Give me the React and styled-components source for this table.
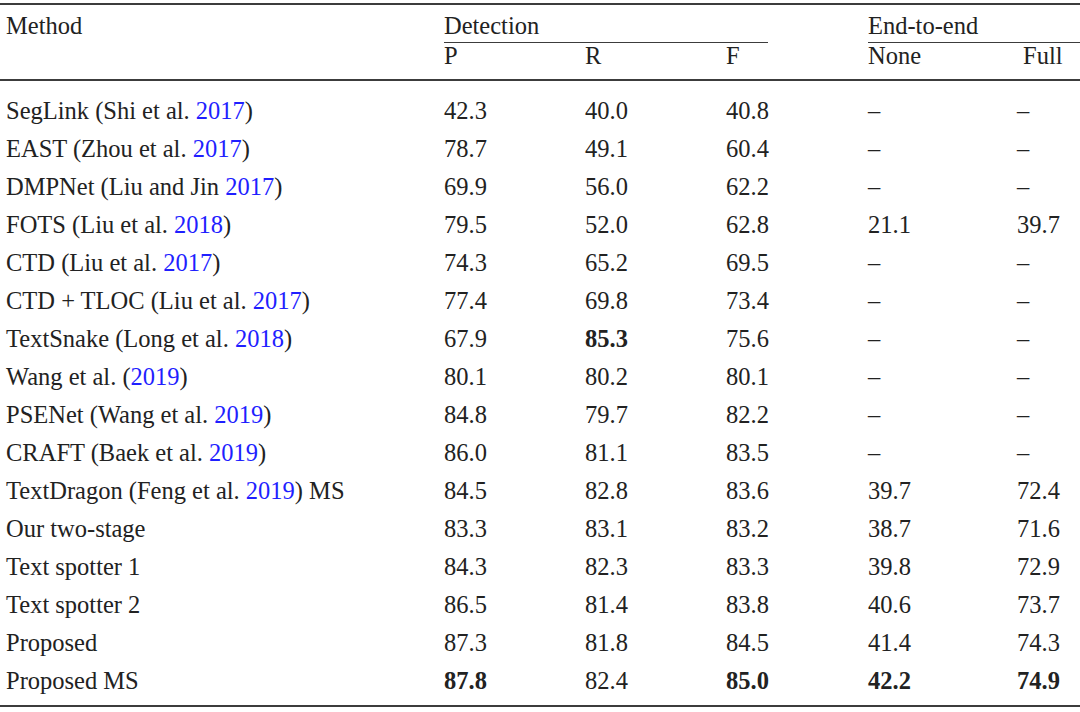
import React from "react";
import styled, { createGlobalStyle } from "styled-components";

const GlobalStyle = createGlobalStyle`
  html, body {
    margin: 0;
    padding: 0;
    background: #ffffff;
  }
  body {
    font-family: "Liberation Serif", "Times New Roman", serif;
    color: #222222;
  }
`;

const Page = styled.div`
  width: 1080px;
  height: 712px;
  padding-top: 3px;
  box-sizing: border-box;
  font-size: 24.5px;
`;

const Rule = styled.div`
  height: 2px;
  background: #3c3c3c;
`;

const Cols = `grid-template-columns: 444px 141px 141px 142px 149px 1fr;`;

const HeadTop = styled.div`
  display: grid;
  ${Cols}
  padding-top: 5px;
  line-height: 32px;
  height: 32px;
`;

const HeadBottom = styled.div`
  display: grid;
  ${Cols}
  line-height: 28px;
  padding-bottom: 9px;
`;

const GroupCell = styled.div`
  grid-column: ${(p) => p.$span};
  padding-left: ${(p) => p.$indent || 0}px;
  border-bottom: 1px solid #3c3c3c;
  width: ${(p) => p.$line}px;
  box-sizing: border-box;
`;

const Cell = styled.div`
  padding-left: ${(p) => p.$indent || 0}px;
  font-weight: ${(p) => (p.$bold ? 700 : 400)};
  white-space: nowrap;
`;

const Body = styled.div`
  padding-top: 11px;
  padding-bottom: 5px;
`;

const Row = styled.div`
  display: grid;
  ${Cols}
  height: 38px;
  line-height: 38px;
`;

const Cite = styled.span`
  color: #1f1fff;
`;

const rows = [
  [["SegLink (Shi et al. ", "2017", ")"], "42.3", "40.0", "40.8", "–", "–"],
  [["EAST (Zhou et al. ", "2017", ")"], "78.7", "49.1", "60.4", "–", "–"],
  [["DMPNet (Liu and Jin ", "2017", ")"], "69.9", "56.0", "62.2", "–", "–"],
  [["FOTS (Liu et al. ", "2018", ")"], "79.5", "52.0", "62.8", "21.1", "39.7"],
  [["CTD (Liu et al. ", "2017", ")"], "74.3", "65.2", "69.5", "–", "–"],
  [["CTD + TLOC (Liu et al. ", "2017", ")"], "77.4", "69.8", "73.4", "–", "–"],
  [["TextSnake (Long et al. ", "2018", ")"], "67.9", "*85.3", "75.6", "–", "–"],
  [["Wang et al. (", "2019", ")"], "80.1", "80.2", "80.1", "–", "–"],
  [["PSENet (Wang et al. ", "2019", ")"], "84.8", "79.7", "82.2", "–", "–"],
  [["CRAFT (Baek et al. ", "2019", ")"], "86.0", "81.1", "83.5", "–", "–"],
  [["TextDragon (Feng et al. ", "2019", ") MS"], "84.5", "82.8", "83.6", "39.7", "72.4"],
  [["Our two-stage"], "83.3", "83.1", "83.2", "38.7", "71.6"],
  [["Text spotter 1"], "84.3", "82.3", "83.3", "39.8", "72.9"],
  [["Text spotter 2"], "86.5", "81.4", "83.8", "40.6", "73.7"],
  [["Proposed"], "87.3", "81.8", "84.5", "41.4", "74.3"],
  [["Proposed MS"], "*87.8", "82.4", "*85.0", "*42.2", "*74.9"],
];

function Method({ parts }) {
  const [before, year, after] = parts;
  return (
    <Cell $indent={6}>
      {before}
      {year && <Cite>{year}</Cite>}
      {after}
    </Cell>
  );
}

function Value({ v }) {
  const bold = v.startsWith("*");
  return <Cell $bold={bold}>{bold ? v.slice(1) : v}</Cell>;
}

export default function App() {
  return (
    <Page>
      <GlobalStyle />
      <Rule />
      <HeadTop>
        <Cell $indent={6}>Method</Cell>
        <GroupCell $span="2 / 5" $line={324}>Detection</GroupCell>
        <GroupCell $span="5 / 7" $line={212}>End-to-end</GroupCell>
      </HeadTop>
      <HeadBottom>
        <Cell />
        <Cell>P</Cell>
        <Cell>R</Cell>
        <Cell>F</Cell>
        <Cell>None</Cell>
        <Cell $indent={6}>Full</Cell>
      </HeadBottom>
      <Rule />
      <Body>
        {rows.map((r, i) => (
          <Row key={i}>
            <Method parts={r[0]} />
            {r.slice(1).map((v, j) => (
              <Value key={j} v={v} />
            ))}
          </Row>
        ))}
      </Body>
      <Rule />
    </Page>
  );
}
